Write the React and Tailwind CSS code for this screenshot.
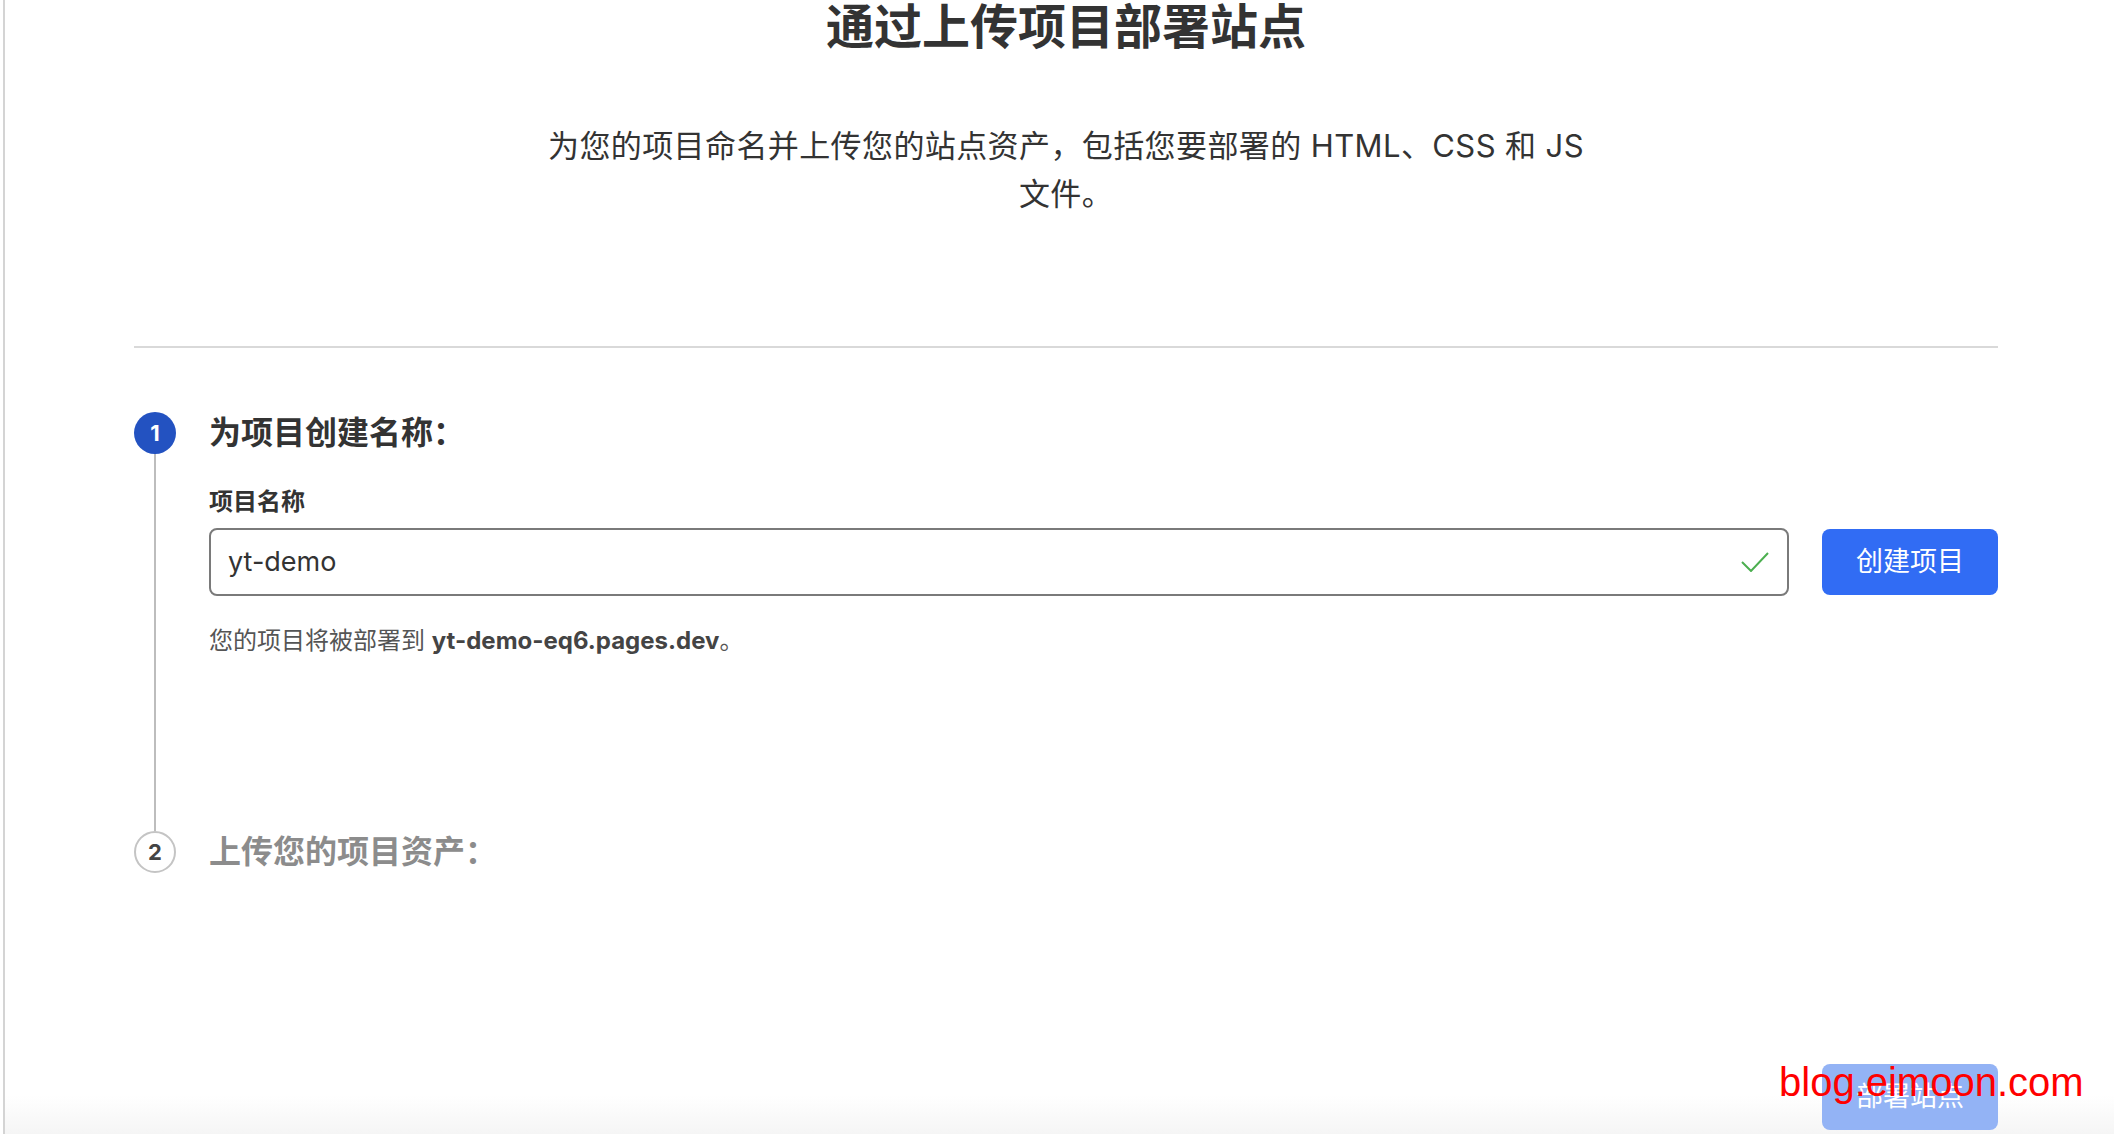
export default function App() {
  return (
    <div className="relative h-[1134px] w-full overflow-hidden bg-white font-[Inter,'Noto_Sans_CJK_SC',sans-serif] text-[#333]">
      <div className="ml-[3px] flex h-full flex-col border-l-2 border-[#d4d4d4]">
        <div className="ml-[129px] w-[1864px]">
          <h1 className="text-center text-[48px] font-bold leading-[54px] text-[#333]">
            通过上传项目部署站点
          </h1>
          <p className="mt-[68px] text-center text-[31px] leading-[48px] tracking-[0.4px] text-[#333]">
            为您的项目命名并上传您的站点资产，包括您要部署的 HTML、CSS 和 JS
            <br />
            文件。
          </p>
          <div className="mt-[128px] h-[2px] w-full bg-[#d9d9d9]" />

          <div className="mt-[64px] flex">
            <div className="flex w-[42px] flex-col items-center">
              <div className="flex h-[42px] w-[42px] items-center justify-center rounded-full bg-[#2352c1] text-[22px] font-bold text-white">
                1
              </div>
              <div className="w-[2px] flex-1 bg-[#bdbdbd]" />
            </div>
            <div className="ml-[33px] flex-1 pb-[173px]">
              <div className="text-[32px] font-bold leading-[42px] text-[#333]">为项目创建名称：</div>
              <div className="mt-[32px] text-[24px] font-bold leading-[32px] text-[#333]">项目名称</div>
              <div className="mt-[10px] flex items-center gap-[33px]">
                <div className="flex h-[68px] flex-1 items-center justify-between rounded-[8px] border-2 border-[#7a7a7a] pl-[17px] pr-[18px]">
                  <span className="text-[27px] text-[#333]">yt-demo</span>
                  <svg width="28" height="20" viewBox="0 0 28 20" fill="none">
                    <polyline points="1,10 10,19 27,1" stroke="#4caf50" strokeWidth="2" fill="none" />
                  </svg>
                </div>
                <button className="h-[66px] w-[176px] rounded-[8px] bg-[#316cf4] text-[27px] text-white">
                  创建项目
                </button>
              </div>
              <div className="mt-[28px] text-[24px] leading-[34px] text-[#555]">
                您的项目将被部署到 <span className="font-bold text-[#444]">yt-demo-eq6.pages.dev</span>。
              </div>
            </div>
          </div>

          <div className="flex items-center">
            <div className="flex h-[42px] w-[42px] items-center justify-center rounded-full border-2 border-[#c4c4c4] bg-white text-[22px] font-bold text-[#444]">
              2
            </div>
            <div className="ml-[33px] text-[32px] font-bold leading-[42px] text-[#8c8c8c]">上传您的项目资产：</div>
          </div>
        </div>

        <div className="flex-1" />
        <div className="flex h-[70px] justify-end bg-[linear-gradient(to_bottom,#ffffff_45%,#f5f5f5)] pr-[116px]">
          <button className="h-[66px] w-[176px] rounded-[8px] bg-[#93b3f5] text-[27px] text-white">
            部署站点
          </button>
        </div>
      </div>

      <div className="absolute left-[1779px] top-[1059px] z-10 font-['Liberation_Sans',Arial,sans-serif] text-[40px] leading-[46px] text-[#ff0000]">
        blog.eimoon.com
      </div>
    </div>
  );
}
